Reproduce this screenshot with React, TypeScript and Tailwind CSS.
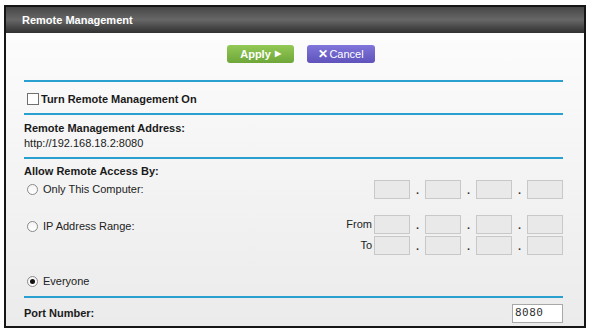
import React from "react";

const font = { fontFamily: '"Liberation Sans", Arial, sans-serif' };

function IpBoxes() {
  const boxes = [0, 1, 2, 3];
  return (
    <div className="flex items-stretch h-[19px]">
      {boxes.map((i) => (
        <React.Fragment key={i}>
          <div className="w-[36px] h-[19px] bg-[#e9e9e9] border border-[#c8c8c8]" />
          {i < 3 && (
            <div className="w-[15px] flex items-end justify-center pb-[3px] text-[11px] font-bold leading-none text-[#333]">.</div>
          )}
        </React.Fragment>
      ))}
    </div>
  );
}

function Radio({ checked }: { checked?: boolean }) {
  return (
    <span className="w-[11px] h-[11px] rounded-full border border-[#8a8a8a] bg-linear-to-b from-[#f4f4f4] to-white flex items-center justify-center shrink-0">
      {checked && <span className="w-[5px] h-[5px] rounded-full bg-[#111]" />}
    </span>
  );
}

function Line() {
  return <div className="h-[2px] bg-[#29a0cf]" />;
}

export default function App() {
  return (
    <div className="w-[590px] h-[333px] bg-white pt-[5px] pl-[4px]" style={font}>
      <div className="w-[582px] h-[323px] border-2 border-[#161616] flex flex-col">
        <div className="h-[26px] bg-linear-to-b from-[#474747] via-[#676767] to-[#303030] flex items-center pl-[16px] text-[11px] font-bold text-white">
          Remote Management
        </div>
        <div className="flex-1 bg-linear-to-b from-[#fcfcfc] to-[#ebebeb] pl-[18px] pr-[21px] flex flex-col">
          <div className="flex mt-[12px] pl-[203px] gap-[13px]">
            <div className="w-[67px] h-[18px] rounded-[3px] bg-linear-to-b from-[#93c955] to-[#6ea63a] flex items-center justify-center text-[11px] font-bold text-white">
              Apply <span className="ml-[4px] text-[8px]">▶</span>
            </div>
            <div className="w-[68px] h-[18px] rounded-[3px] bg-linear-to-b from-[#8075da] to-[#5f53bb] flex items-center justify-center text-[11px] text-white">
              <span className="font-bold text-[12px] mr-[1px]">✕</span>Cancel
            </div>
          </div>
          <div className="mt-[17px]"><Line /></div>
          <div className="mt-[9px] h-[16px] flex items-center pl-[3px]">
            <span className="w-[12px] h-[12px] border border-[#707070] bg-white mr-[2px]" />
            <span className="text-[11px] font-bold text-[#1a1a1a]">Turn Remote Management On</span>
          </div>
          <div className="mt-[6px]"><Line /></div>
          <div className="mt-[6px] text-[11px] leading-[14px] font-bold text-[#1a1a1a]">Remote Management Address:</div>
          <div className="mt-[1px] text-[11px] leading-[14px] text-[#1a1a1a]">http://192.168.18.2:8080</div>
          <div className="mt-[7px]"><Line /></div>
          <div className="mt-[5px] text-[11px] leading-[14px] font-bold text-[#1a1a1a]">Allow Remote Access By:</div>
          <div className="mt-[2px] flex items-center justify-between h-[19px]">
            <div className="flex items-center pl-[3px] gap-[5px] text-[11px] text-[#222]">
              <Radio /> Only This Computer:
            </div>
            <IpBoxes />
          </div>
          <div className="mt-[16px] flex justify-between">
            <div className="flex items-center pl-[3px] gap-[5px] text-[11px] text-[#222] h-[14px] mt-[4px]">
              <Radio /> IP Address Range:
            </div>
            <div className="flex flex-col gap-[2px]">
              <div className="flex items-center">
                <span className="text-[11px] text-[#222] mr-[2px]">From</span>
                <IpBoxes />
              </div>
              <div className="flex items-center justify-end">
                <span className="text-[11px] text-[#222] mr-[2px]">To</span>
                <IpBoxes />
              </div>
            </div>
          </div>
          <div className="mt-[19px] flex items-center pl-[3px] gap-[5px] text-[11px] leading-[14px] text-[#222]">
            <Radio checked /> Everyone
          </div>
          <div className="mt-[8px]"><Line /></div>
          <div className="mt-[6px] flex items-center justify-between h-[19px]">
            <span className="text-[11px] font-bold text-[#1a1a1a]">Port Number:</span>
            <div className="w-[51px] h-[19px] bg-white border border-[#a8a8a8] flex items-center pl-[2px] text-[11px] tracking-[0.5px] text-[#333]" style={{ fontFamily: '"DejaVu Sans Mono", monospace' }}>
              8080
            </div>
          </div>
        </div>
      </div>
    </div>
  );
}
